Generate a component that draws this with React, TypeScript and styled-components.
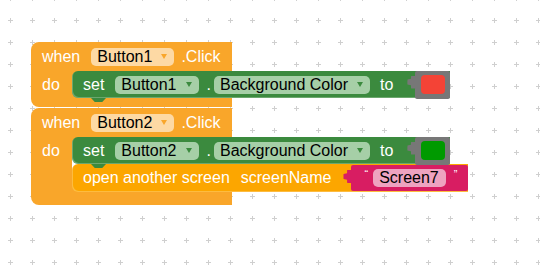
import styled, { createGlobalStyle } from 'styled-components';

const Global = createGlobalStyle`
  html, body { margin: 0; padding: 0; background: #fff; }
  body { font-family: "Liberation Sans", Arial, sans-serif; }
`;

const EVENT = '#f9a62a';
const CONTROL = '#fca600';
const SETTER = '#3b8a3e';
const TEXT = '#d81d62';

const Workspace = styled.div`
  position: relative;
  width: 540px;
  height: 274px;
  overflow: hidden;
  background: #fff;
`;

const GridSvg = styled.svg`
  position: absolute;
  inset: 0;
`;

const EventBlock = styled.div<{ $top: number }>`
  position: absolute;
  left: 31px;
  top: ${({ $top }) => $top}px;
  display: flex;
  flex-direction: column;
  font-size: 16px;
  color: #fff;
`;

const Hat = styled.div`
  box-sizing: border-box;
  width: 201px;
  height: 29px;
  padding-left: 11px;
  display: flex;
  align-items: center;
  background: ${EVENT};
  border-radius: 8px 0 0 0;
`;

const Body = styled.div`
  display: flex;
`;

const DoColumn = styled.div`
  box-sizing: border-box;
  width: 41px;
  padding: 5px 0 0 11px;
  line-height: 18px;
  background: ${EVENT};
`;

const Statements = styled.div`
  display: flex;
  flex-direction: column;
  align-items: flex-start;
  background:
    linear-gradient(${EVENT}, ${EVENT}) top left / 8px 8px no-repeat,
    linear-gradient(${EVENT}, ${EVENT}) bottom left / 8px 8px no-repeat;
`;

const Foot = styled.div<{ $h: number }>`
  width: 201px;
  height: ${({ $h }) => $h}px;
  background: ${EVENT};
  border-radius: 0 0 0 8px;
`;

const Label = styled.span<{ $gap?: number }>`
  margin-left: ${({ $gap }) => $gap ?? 0}px;
  white-space: nowrap;
  line-height: 18px;
`;

const Statement = styled.div<{ $bg: string; $tab?: boolean }>`
  position: relative;
  box-sizing: border-box;
  height: ${({ $tab }) => ($tab ? 27 : 28)}px;
  padding-left: 11px;
  display: flex;
  align-items: center;
  background: ${({ $bg }) => $bg};
  border-radius: 6px 0 0 6px;
  box-shadow: inset 1px -1px 0 rgba(255, 255, 255, 0.25);
  z-index: ${({ $tab }) => ($tab ? 2 : 1)};

  &::after {
    content: '';
    display: ${({ $tab }) => ($tab ? 'block' : 'none')};
    position: absolute;
    left: 19px;
    bottom: -4px;
    width: 15px;
    height: 4px;
    background: ${({ $bg }) => $bg};
    clip-path: polygon(0 0, 100% 0, 75% 100%, 25% 100%);
  }
`;

const Pill = styled.span<{ $bg: string; $gap?: number }>`
  margin-left: ${({ $gap }) => $gap ?? 0}px;
  height: 18px;
  padding: 0 7px 0 6px;
  display: inline-flex;
  align-items: center;
  gap: 9px;
  border-radius: 5px;
  background: ${({ $bg }) => $bg};
  color: #000;
  line-height: 18px;
  white-space: nowrap;
`;

const Arrow = styled.span<{ $color: string }>`
  width: 0;
  height: 0;
  border-left: 3.5px solid transparent;
  border-right: 3.5px solid transparent;
  border-top: 5px solid ${({ $color }) => $color};
`;

const ValueBlock = styled.div<{ $bg: string; $w: number; $h: number; $gap?: number }>`
  position: relative;
  box-sizing: border-box;
  width: ${({ $w }) => $w}px;
  height: ${({ $h }) => $h}px;
  margin-left: ${({ $gap }) => $gap ?? 0}px;
  display: flex;
  align-items: center;
  background: ${({ $bg }) => $bg};
  border-radius: 2px;

  &::before {
    content: '';
    position: absolute;
    left: -8px;
    top: 5px;
    width: 9px;
    height: 13px;
    background: ${({ $bg }) => $bg};
    border-radius: 5px 0 0 5px;
    clip-path: polygon(40% 0, 100% 0, 100% 100%, 40% 100%, 40% 75%, 0 70%, 0 30%, 40% 25%);
  }
`;

const Swatch = styled.span<{ $color: string }>`
  margin-left: 6px;
  width: 24px;
  height: 19px;
  border-radius: 4px;
  background: ${({ $color }) => $color};
`;

const Quote = styled.span<{ $gap: number }>`
  margin-left: ${({ $gap }) => $gap}px;
  align-self: flex-start;
  margin-top: 4px;
  font-size: 11px;
  line-height: 11px;
`;

const Grid = () => (
  <GridSvg width="540" height="274">
    <defs>
      <pattern id="grid" width="22" height="22" x="-1" y="9" patternUnits="userSpaceOnUse">
        <path d="M9 11.5h5M11.5 9v5" stroke="#cfcfcf" strokeWidth="1" />
      </pattern>
    </defs>
    <rect width="540" height="274" fill="url(#grid)" />
  </GridSvg>
);

const SetColor = ({ button, color }: { button: string; color: string }) => (
  <Statement $bg={SETTER} $tab>
    <Label>set</Label>
    <Pill $bg="#a6cfa7" $gap={11}>
      {button}
      <Arrow $color={SETTER} />
    </Pill>
    <Label $gap={8}>.</Label>
    <Pill $bg="#a6cfa7" $gap={3}>
      Background Color
      <Arrow $color={SETTER} />
    </Pill>
    <Label $gap={10}>to</Label>
    <ValueBlock $bg="#777" $w={35} $h={28} $gap={22}>
      <Swatch $color={color} />
    </ValueBlock>
  </Statement>
);

const When = ({ button }: { button: string }) => (
  <Hat>
    <Label>when</Label>
    <Pill $bg="#fdd9a4" $gap={11}>
      {button}
      <Arrow $color={EVENT} />
    </Pill>
    <Label $gap={7}>.Click</Label>
  </Hat>
);

export default function App() {
  return (
    <Workspace>
      <Global />
      <Grid />
      <EventBlock $top={42}>
        <When button="Button1" />
        <Body>
          <DoColumn>do</DoColumn>
          <Statements>
            <SetColor button="Button1" color="#f44336" />
          </Statements>
        </Body>
        <Foot $h={9} />
      </EventBlock>
      <EventBlock $top={108}>
        <When button="Button2" />
        <Body>
          <DoColumn>do</DoColumn>
          <Statements>
            <SetColor button="Button2" color="#009a00" />
            <Statement $bg={CONTROL}>
              <Label>open another screen</Label>
              <Label $gap={11}>screenName</Label>
              <ValueBlock $bg={TEXT} $w={117} $h={26} $gap={20}>
                <Quote $gap={13}>“</Quote>
                <Pill $bg="#eea3c0" $gap={5}>Screen7</Pill>
                <Quote $gap={8}>”</Quote>
              </ValueBlock>
            </Statement>
          </Statements>
        </Body>
        <Foot $h={13} />
      </EventBlock>
    </Workspace>
  );
}
